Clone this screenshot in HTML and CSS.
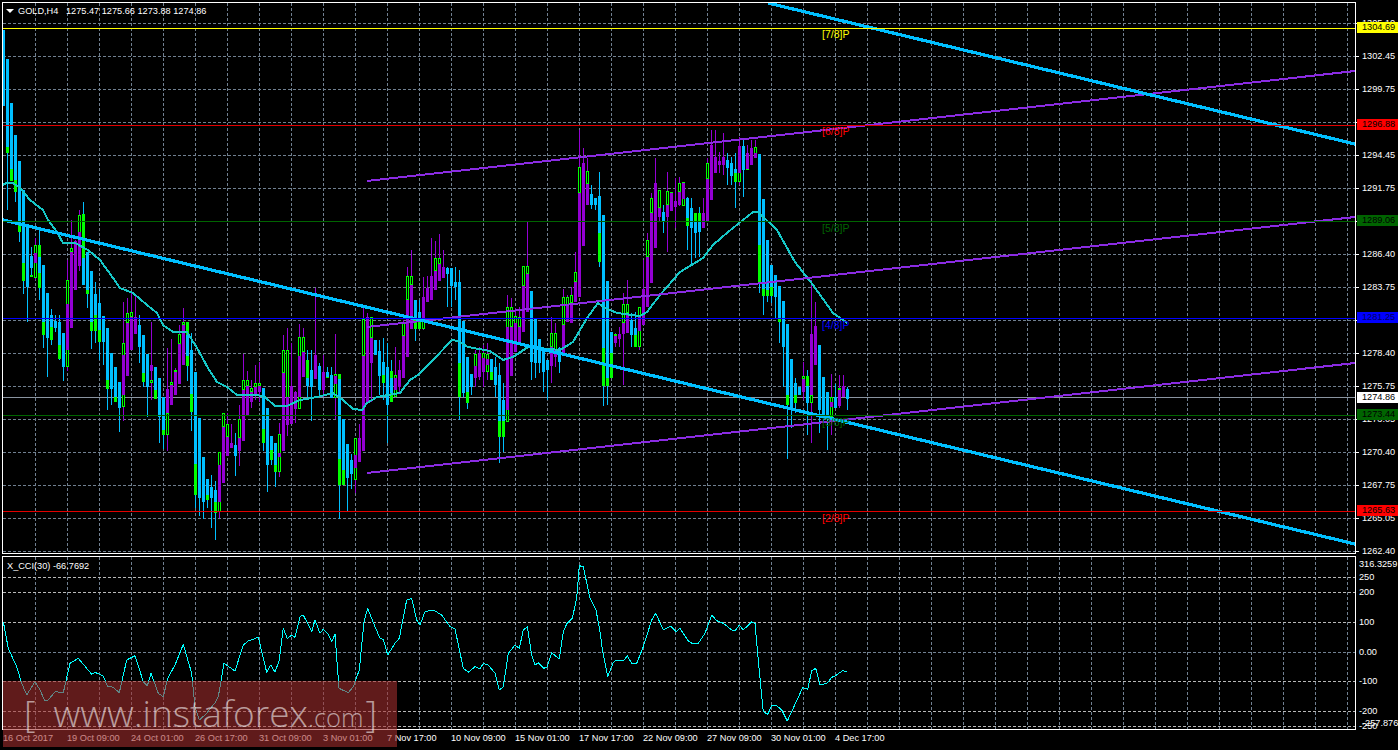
FILE: index.html
```html
<!DOCTYPE html>
<html lang="en">
<head>
<meta charset="utf-8">
<title>GOLD,H4</title>
<link rel="stylesheet" href="styles.css">
</head>
<body>
<div class="terminal">
  <div class="row">
    <div class="pane pane-main">
      <svg id="main" class="plot" viewBox="3 3 1352 550" width="1352" height="550" aria-label="GOLD H4 candlestick chart"></svg>
      <div class="legend"><span class="caret"></span><span class="sym">GOLD,H4</span><span>1275.47 1275.66 1273.88 1274.86</span></div>
      <span class="murrey m78">[7/8]P</span>
      <span class="murrey m68">[6/8]P</span>
      <span class="murrey m58">[5/8]P</span>
      <span class="murrey m48">[4/8]P</span>
      <span class="murrey m38">[3/8]P</span>
      <span class="murrey m28">[2/8]P</span>
    </div>
    <div class="axis axis-main">
      <div class="tick">1305.10</div><div class="tick">1302.45</div><div class="tick">1299.75</div><div class="tick">1297.10</div>
      <div class="tick">1294.45</div><div class="tick">1291.75</div><div class="tick">1289.10</div><div class="tick">1286.40</div>
      <div class="tick">1283.75</div><div class="tick">1281.05</div><div class="tick">1278.40</div><div class="tick">1275.75</div>
      <div class="tick">1273.05</div><div class="tick">1270.40</div><div class="tick">1267.75</div><div class="tick">1265.05</div>
      <div class="tick">1262.40</div>
      <span class="tag tag-yellow">1304.69</span>
      <span class="tag tag-red t-125">1296.88</span>
      <span class="tag tag-green t-221">1289.06</span>
      <span class="tag tag-blue">1281.25</span>
      <span class="tag tag-white">1274.86</span>
      <span class="tag tag-green t-415">1273.44</span>
      <span class="tag tag-red t-511">1265.63</span>
    </div>
  </div>
  <div class="row row-cci">
    <div class="pane pane-cci">
      <svg id="cci" class="plot" viewBox="3 557 1352 172" width="1352" height="172" aria-label="X_CCI indicator"></svg>
      <div class="cci-title">X_CCI(30) -66.7692</div>
    </div>
    <div class="axis axis-cci">
      <span class="cci-label c316">316.3259</span>
      <span class="cci-label c250">250</span>
      <span class="cci-label c200">200</span>
      <span class="cci-label c100">100</span>
      <span class="cci-label c0">0.00</span>
      <span class="cci-label cm100">-100</span>
      <span class="cci-label cm200">-200</span>
      <span class="cci-label cm250">-250</span>
      <span class="cci-label cm257">-257.8763</span>
    </div>
  </div>
  <div class="time-axis">
    <span>16 Oct 2017</span><span>19 Oct 09:00</span><span>24 Oct 01:00</span><span>26 Oct 17:00</span>
    <span>31 Oct 09:00</span><span>3 Nov 01:00</span><span>7 Nov 17:00</span><span>10 Nov 09:00</span>
    <span>15 Nov 01:00</span><span>17 Nov 17:00</span><span>22 Nov 09:00</span><span>27 Nov 09:00</span>
    <span>30 Nov 01:00</span><span>4 Dec 17:00</span>
  </div>
  <div class="watermark">
    <span class="bracket">[</span><span class="www">www.instaforex</span><span class="dotcom">.com</span><span class="bracket">]</span>
  </div>
</div>
<script src="chart.js"></script>
</body>
</html>
```

FILE: styles.css
```css
* { box-sizing: border-box; }
html, body { margin: 0; height: 100%; background: #000; overflow: hidden; }
body { font-family: "Liberation Sans", Arial, sans-serif; color: #fff; }

.terminal { position: relative; width: 1398px; height: 750px; padding: 2px 0 0 2px; background: #000; }
.row { display: flex; height: 552px; }
.row-cci { height: 174px; margin-top: 2px; }

.pane { position: relative; width: 1354px; border: 1px solid #fff; background: #000; }
.plot { display: block; }

.legend { position: absolute; left: 3px; top: 2px; display: flex; align-items: center; font-size: 9.2px; line-height: 12px; white-space: pre; }
.caret { width: 0; height: 0; margin-right: 4px; border-left: 4px solid transparent; border-right: 4px solid transparent; border-top: 4px solid #fff; }
.sym { margin-right: 7.6px; }
.cci-title { position: absolute; left: 4px; top: 3px; font-size: 9.2px; line-height: 12px; }

.murrey { position: absolute; left: 819px; font-size: 10.5px; line-height: 12px; }
.m78 { top: 25px; color: #ffff00; }
.m68 { top: 122px; color: #ff0000; }
.m58 { top: 219px; color: #006400; }
.m48 { top: 316px; color: #0000ff; }
.m38 { top: 413px; color: #006400; }
.m28 { top: 509px; color: #ff0000; }

.axis { position: relative; width: 42px; font-size: 9.2px; }
.axis-main { padding-top: 15px; }
.tick { position: relative; height: 33px; line-height: 12px; padding-left: 6px; }
.tick::before { content: ""; position: absolute; left: 0; top: 6px; width: 3px; height: 1px; background: #fff; }

.tag { position: absolute; left: 1px; width: 41px; height: 11px; line-height: 11px; padding-left: 5px; color: #000; }
.tag-yellow { top: 20px; background: #ffff00; }
.tag-red { background: #ff0000; }
.tag-green { background: #006400; }
.tag-blue { top: 310px; background: #0000ff; color: #000060; }
.tag-white { top: 390px; background: #fff; }
.t-125 { top: 117px; }
.t-221 { top: 213px; }
.t-415 { top: 407px; }
.t-511 { top: 503px; }

.cci-label { position: absolute; left: 3px; line-height: 12px; white-space: nowrap; }
.c316 { top: 2px; }
.c250 { top: 15px; }
.c200 { top: 30px; }
.c100 { top: 60px; }
.c0 { top: 90px; }
.cm100 { top: 119px; }
.cm200 { top: 149px; }
.cm250 { top: 164px; }
.cm257 { top: 161px; left: 6px; }

.time-axis { display: grid; grid-template-columns: repeat(14, 64px); margin: 2px 0 0 1px; font-size: 9.2px; line-height: 12px; }
.time-axis span { white-space: nowrap; }

.watermark { position: absolute; left: 3px; top: 681px; width: 394px; height: 66px; display: flex; align-items: baseline; padding: 0 0 0 21px; background: rgba(165, 46, 46, 0.58); color: rgba(255, 255, 255, 0.56); font-family: "Open Sans", "Liberation Sans", sans-serif; font-weight: 300; line-height: 64px; white-space: nowrap; }
.www { margin-left: 18px; font-size: 37px; }
.dotcom { font-size: 25.5px; }
.bracket { font-size: 36px; font-weight: 300; }
.dotcom + .bracket { margin-left: 2px; }
```

FILE: chart.js
```js
var NS = 'http://www.w3.org/2000/svg';
function el(parent, name, attrs) {
  var e = document.createElementNS(NS, name);
  for (var k in attrs) e.setAttribute(k, attrs[k]);
  parent.appendChild(e);
  return e;
}
var main = document.getElementById('main');
var cci = document.getElementById('cci');
var CY = '#00bfff', PU = '#9400d3', GR = '#00ff00';

function hline(svg, y, x1, x2, stroke, dash) {
  var a = { x1: x1, x2: x2, y1: y + .5, y2: y + .5, stroke: stroke, 'stroke-width': 1, 'shape-rendering': 'crispEdges' };
  if (dash) a['stroke-dasharray'] = dash;
  el(svg, 'line', a);
}
function vgrid(svg, y1, y2) {
  for (var x = 35; x < 1355; x += 32) {
    el(svg, 'line', { x1: x + .5, x2: x + .5, y1: y1, y2: y2, stroke: '#708090', 'stroke-dasharray': '3 2', 'shape-rendering': 'crispEdges' });
  }
}

/* main grid */
vgrid(main, 3, 553);
for (var y = 23; y <= 551; y += 33) hline(main, y, 3, 1355, '#708090', '3 2');
hline(main, 397, 3, 1355, '#8a94a0');

/* candles: [hi, top, bot, lo, colour, gTop, gBot] in zoom coordinates */
var A = [
[-510,-510,-282,-282,'c',-474,-345],[-423,-423,-159,30,'c',-159,-141],[-291,-291,-93,-57,'c',-93,-57],[-195,-195,-60,6,'c',-60,-24],
[-117,-117,74,125,'c',74,96],[-30,-30,190,282,'c',190,243],[80,80,262,365,'c'],[140,168,203,232,'c',226,230],
[115,160,190,240,'p',135,235],[90,172,220,300,'c',135,263],[195,195,365,445,'c',365,405],[280,280,415,530,'c'],
[328,345,380,435,'c',380,420],[345,362,383,395,'c'],[345,365,435,480,'c',435,478],[400,400,500,543,'c'],
[180,312,450,512,'p',240,500],[60,155,383,383,'p',145,155],[120,122,270,270,'p'],[30,95,197,212,'p',45,120],
[5,173,255,255,'c',42,173],[155,155,270,325,'c',270,282],[213,213,365,447,'c',365,392],[245,282,345,430,'c',345,392],
[268,310,390,480,'c',390,425],[348,348,425,495,'c'],[384,384,540,630,'c',540,567],[460,460,567,615,'c'],
[501,501,590,605,'c',590,605],[546,546,625,695,'c'],[305,465,585,662,'p',430,620],[295,370,527,527,'p',340,370],
[280,350,450,450,'p',336,350],[285,350,402,402,'p'],[345,375,440,490,'c'],[405,405,520,560,'c',520,545],
[462,462,560,650,'c'],[365,495,513,600,'p',540,550],[501,501,570,597,'c',570,597],[534,534,650,730,'c'],
[590,590,690,748,'c',677,705],[445,567,640,752,'p',640,705],[418,555,615,615,'p',545,555],[505,515,585,585,'p',510,515],
[375,432,552,552,'p',402,432],[325,375,495,495,'p',365,375],[365,405,467,542,'c',365,497],[400,450,582,692,'c',582,635],
[516,516,792,925,'c',792,885],[654,654,895,948,'c'],[771,771,905,958,'c'],[837,837,885,925,'c',885,900],
[825,861,893,985,'c'],[843,870,905,1020,'c',905,938],[795,795,905,955,'p',757,935],[680,682,850,850,'p',640,682],
[640,712,767,767,'p',672,712],[672,729,743,743,'p'],[700,736,767,827,'c'],[615,715,752,797,'p',658,715],
[462,570,722,722,'p',540,570],[513,557,645,645,'p',540,557],[540,575,607,625,'p',565,575],[495,560,585,600,'p',548,560],
[487,557,575,605,'p',548,557],[565,565,688,752,'c',688,728],[624,624,795,875,'c'],[708,708,750,795,'c',750,780],
[729,729,795,862,'c',795,815],[670,760,770,830,'p',703,815],[405,519,752,752,'p',450,519],[385,590,675,708,'p',450,675],
[430,558,672,672,'p',615,672],[573,575,627,668,'p',575,627],[372,468,590,627,'p',412,627],[385,455,530,530,'p',412,455],
[450,535,558,590,'c',480,535],[450,510,562,662,'c'],[265,465,537,537,'p'],[490,498,570,590,'c'],
[465,515,570,590,'p',525,568],[500,516,530,535,'c',530,535],[500,525,593,593,'c'],[402,528,553,658,'p',522,593],
[537,537,778,957,'c',522,855],[657,657,810,855,'c',810,855],[733,733,835,933,'c'],[762,780,822,867,'c'],
[715,766,803,878,'p',715,840],[672,715,785,785,'p',713,715],[320,468,752,752,'p',357,468],[340,350,610,610,'p'],
[350,413,490,605,'p',350,413],[420,421,465,465,'c',420,465],[420,453,527,585,'c'],[415,486,525,600,'c',525,550],
[430,502,615,728,'c'],[480,535,580,605,'c',512,605],[440,533,570,595,'p',525,592],[480,510,560,580,'p']
];
var B = [
[570,617,745,745,'p',575,617],[410,510,680,680,'p',438,510],[360,465,597,597,'p',438,465],[510,510,570,632,'c',570,597],
[510,545,573,597,'c',573,597],[440,502,570,600,'p',502,597],[437,475,515,515,'p'],[325,437,510,510,'p'],
[333,423,480,480,'p',385,423],[312,403,453,453,'p',385,403],[360,412,443,443,'p'],[410,415,432,530,'c'],
[415,415,468,530,'c'],[410,455,470,510,'c'],[420,455,700,870,'c',700,800],[573,573,790,800,'c'],
[682,682,785,838,'c',785,820],[733,733,770,795,'c'],[660,707,745,770,'p',672,745],[650,672,740,750,'p',672,700],
[645,685,725,770,'p',670,725],[640,688,705,750,'p',672,725],[688,688,725,750,'c',725,750],[680,712,765,800,'c'],
[700,735,873,1000,'c',873,920],[760,810,873,965,'c',873,920],[495,590,840,875,'p',530,875],[505,590,738,738,'p',530,590],
[533,580,665,665,'p',558,665],[530,590,640,640,'p',560,590],[430,468,605,605,'p',408,468],[277,432,545,545,'p',408,432],
[483,483,695,750,'c',655,695],[567,567,700,745,'c'],[628,628,700,730,'c'],[660,660,725,785,'c'],
[690,690,720,810,'c'],[562,652,708,760,'p',610,652],[580,660,680,710,'p',610,660],[650,655,695,730,'c'],
[478,585,670,670,'p',500,585],[495,525,577,577,'p',500,525],[470,518,578,578,'p',495,518],[365,455,515,515,'p',427,455],
[0,190,500,500,'p',112,190],[55,100,347,347,'p'],[85,163,225,225,'p',123,163],[165,192,225,238,'c'],
[205,205,225,240,'c'],[125,198,310,410,'c',310,395],[255,255,653,828,'c',653,768],[453,453,745,825,'c',745,768],
[607,607,670,745,'c',670,745],[610,617,640,650,'p',612,617],[590,612,628,650,'p'],[490,580,612,765,'p',522,580],
[450,550,610,610,'p',522,550],[550,570,615,650,'c'],[545,595,615,650,'c',615,650],[530,562,603,660,'p',532,650],
[390,478,585,585,'p'],[310,380,530,530,'p',330,380],[190,250,458,458,'p',205,250],[85,160,353,353,'p'],
[180,235,260,275,'p',180,235],[225,247,272,310,'c'],[125,225,262,365,'p',183,225],[185,190,242,242,'p',187,190],
[145,213,232,295,'p'],[140,187,225,228,'p',160,187],[155,160,208,228,'p',155,228],[200,205,263,360,'c',263,287],
[205,235,295,405,'c'],[250,275,308,385,'c',250,275],[230,277,305,380,'c',250,277],[205,250,293,293,'p'],
[85,148,273,273,'p',100,148],[0,45,210,210,'p'],[0,80,130,130,'p'],[65,93,105,130,'p'],
[10,82,105,135,'p'],[70,90,115,165,'c'],[80,100,137,165,'c'],[70,118,130,235,'c',130,155],
[20,48,130,165,'p',48,155],[30,48,120,200,'c'],[45,70,118,120,'p',70,120],[30,53,105,105,'p'],
[30,68,85,85,'p',52,85],[72,72,345,490,'c',345,460],[207,207,478,555,'c',478,498],[330,330,480,515,'c',480,498],
[405,405,470,520,'c',470,498],[435,435,500,565,'c'],[468,468,568,640,'c',568,575],[513,513,650,650,'c']
];
var C = [
[63,63,200,320,'c'],[132,132,345,537,'c',345,375],[237,237,385,445,'c'],[295,308,345,400,'c',345,370],
[320,320,345,345,'c'],[245,297,335,360,'p',288,297],[270,318,370,465,'c',288,318],[0,162,345,488,'p',345,370],
[65,138,255,255,'p'],[195,195,390,458,'c'],[291,291,410,430,'c'],[336,336,405,510,'c'],
[282,365,380,465,'p',352,410],[312,352,385,385,'c',352,385],[285,330,378,385,'p',324,330],[285,318,352,352,'p'],
[320,327,357,390,'c']
];
function drawCandle(k, c, ox, oy) {
  var x = 2 + 4 * k;
  var col = c[4] === 'p' ? PU : CY;
  var Y = function (v) { return Math.round(oy + v / 3); };
  var g = el(main, 'g', { 'shape-rendering': 'crispEdges' });
  el(g, 'rect', { x: x + 1, y: Y(c[0]), width: 1, height: Math.max(1, Y(c[3]) - Y(c[0])), fill: col });
  if (c[5] !== undefined) {
    el(g, 'rect', { x: x, y: Y(c[5]), width: 3, height: Math.max(1, Y(c[6]) - Y(c[5])), fill: GR });
    if (c[4] === 'p') el(g, 'rect', { x: x + 1, y: Y(c[5]) + 1, width: 1, height: Math.max(0, Y(c[6]) - Y(c[5]) - 2), fill: '#000' });
  }
  el(g, 'rect', { x: x, y: Y(c[1]), width: 3, height: Math.max(1, Y(c[2]) - Y(c[1])), fill: col });
}
A.forEach(function (c, i) { drawCandle(i, c, 0, 200); });
B.forEach(function (c, i) { drawCandle(100 + i, c, 400, 130); });
C.forEach(function (c, i) { drawCandle(195 + i, c, 740, 280); });

function poly(svg, pts, stroke, w) {
  el(svg, 'polyline', { points: pts.map(function (p) { return p[0] + ',' + p[1]; }).join(' '), fill: 'none', stroke: stroke, 'stroke-width': w, 'shape-rendering': 'crispEdges', 'stroke-linejoin': 'round' });
}
/* moving average */
poly(main, [[3,185],[6,183],[13,183],[20,188],[30,200],[43,210],[48,220],[57,232],[63,243],[75,243],[88,250],[100,260],[113,278],[120,288],[133,293],[147,305],[157,313],[163,325],[173,332],[187,332],[197,348],[208,368],[217,382],[227,387],[237,395],[257,395],[265,397],[275,406],[287,406],[300,400],[317,397],[333,393],[343,400],[353,409],[362,410],[367,403],[377,397],[400,393],[410,380],[418,375],[433,360],[452,340],[458,341],[468,347],[490,351],[503,360],[513,357],[528,347],[560,350],[573,342],[587,318],[598,303],[605,308],[617,313],[640,316],[647,312],[660,295],[680,272],[703,258],[713,245],[728,232],[753,212],[758,212],[777,230],[795,262],[813,285],[833,313],[847,323]], '#16c8c8', 2);
/* channel lines */
poly(main, [[367,181],[1355,71]], '#8a2be2', 2);
poly(main, [[367,327],[1355,217]], '#8a2be2', 2);
poly(main, [[367,473],[1355,363]], '#8a2be2', 2);
/* trend lines */
poly(main, [[768,3],[1355,144]], CY, 3.2);
poly(main, [[3,220],[1355,544]], CY, 3.2);
/* levels */
hline(main, 28, 3, 1355, '#ffff00');
hline(main, 125, 3, 1355, '#e00000');
hline(main, 221, 3, 1355, '#006400');
hline(main, 318, 3, 1355, '#0000ff');
hline(main, 415, 3, 1355, '#006400');
hline(main, 511, 3, 1355, '#e00000');

/* CCI pane */
vgrid(cci, 557, 729);
[577, 592, 622, 681, 711, 726].forEach(function (y) { hline(cci, y, 3, 1355, '#b8b8b8', '3 2'); });
hline(cci, 652, 3, 1355, '#708090', '3 2');
var z3 = [[10,245],[25,325],[50,380],[65,430],[80,465],[105,425],[120,450],[135,483],[145,480],[165,455],[190,458],[210,370],[235,355],[275,403],[285,397],[310,408],[322,438],[340,442],[358,458],[380,360],[405,347],[430,425],[442,438],[453,400],[475,460],[490,470],[503,415],[525,375],[550,313],[575,400],[585,500],[598,540],[620,520],[645,488],[655,470],[672,370],[705,393],[730,315],[745,303],[775,292],[800,397],[812,375],[825,397],[838,360],[850,265],[862,295],[875,285],[885,292],[900,230],[910,225],[935,275],[945,240],[960,280],[970,268],[985,283],[995,305],[1005,283],[1017,445],[1045,458],[1060,440],[1078,390],[1092,245],[1103,205],[1125,260],[1140,295],[1150,298],[1163,345],[1185,310],[1198,295],[1220,180],[1235,175],[1250,240],[1260,255]];
var z8 = [[15,170],[40,165],[65,180],[90,215],[105,222],[130,340],[145,352],[165,335],[180,342],[190,325],[205,330],[225,355],[238,405],[250,395],[265,295],[285,270],[298,280],[310,225],[322,215],[335,300],[345,330],[355,323],[372,340],[382,335],[395,293],[418,312],[430,230],[440,207],[457,190],[470,130],[478,32],[490,35],[510,130],[528,165],[540,230],[548,290],[563,365],[580,322],[590,315],[610,318],[622,302],[635,325],[650,325],[670,275],[695,195],[707,175],[730,225],[752,213],[768,230],[780,220],[805,258],[820,267],[835,265],[855,235],[875,180],[890,197],[910,205],[935,225],[947,225],[958,210],[970,225],[995,200],[1005,205],[1020,370],[1030,470],[1043,478],[1055,452],[1070,452],[1085,465],[1102,498],[1148,398],[1163,403],[1175,347],[1187,340],[1200,390],[1222,384],[1235,367],[1245,363],[1268,347],[1280,350]];
var line = z3.map(function (p) { return [(p[0] / 3).toFixed(1), (540 + p[1] / 3).toFixed(1)]; })
  .concat(z8.map(function (p) { return [(420 + p[0] / 3).toFixed(1), (555 + p[1] / 3).toFixed(1)]; }));
poly(cci, line, '#00ffff', 1);
```
